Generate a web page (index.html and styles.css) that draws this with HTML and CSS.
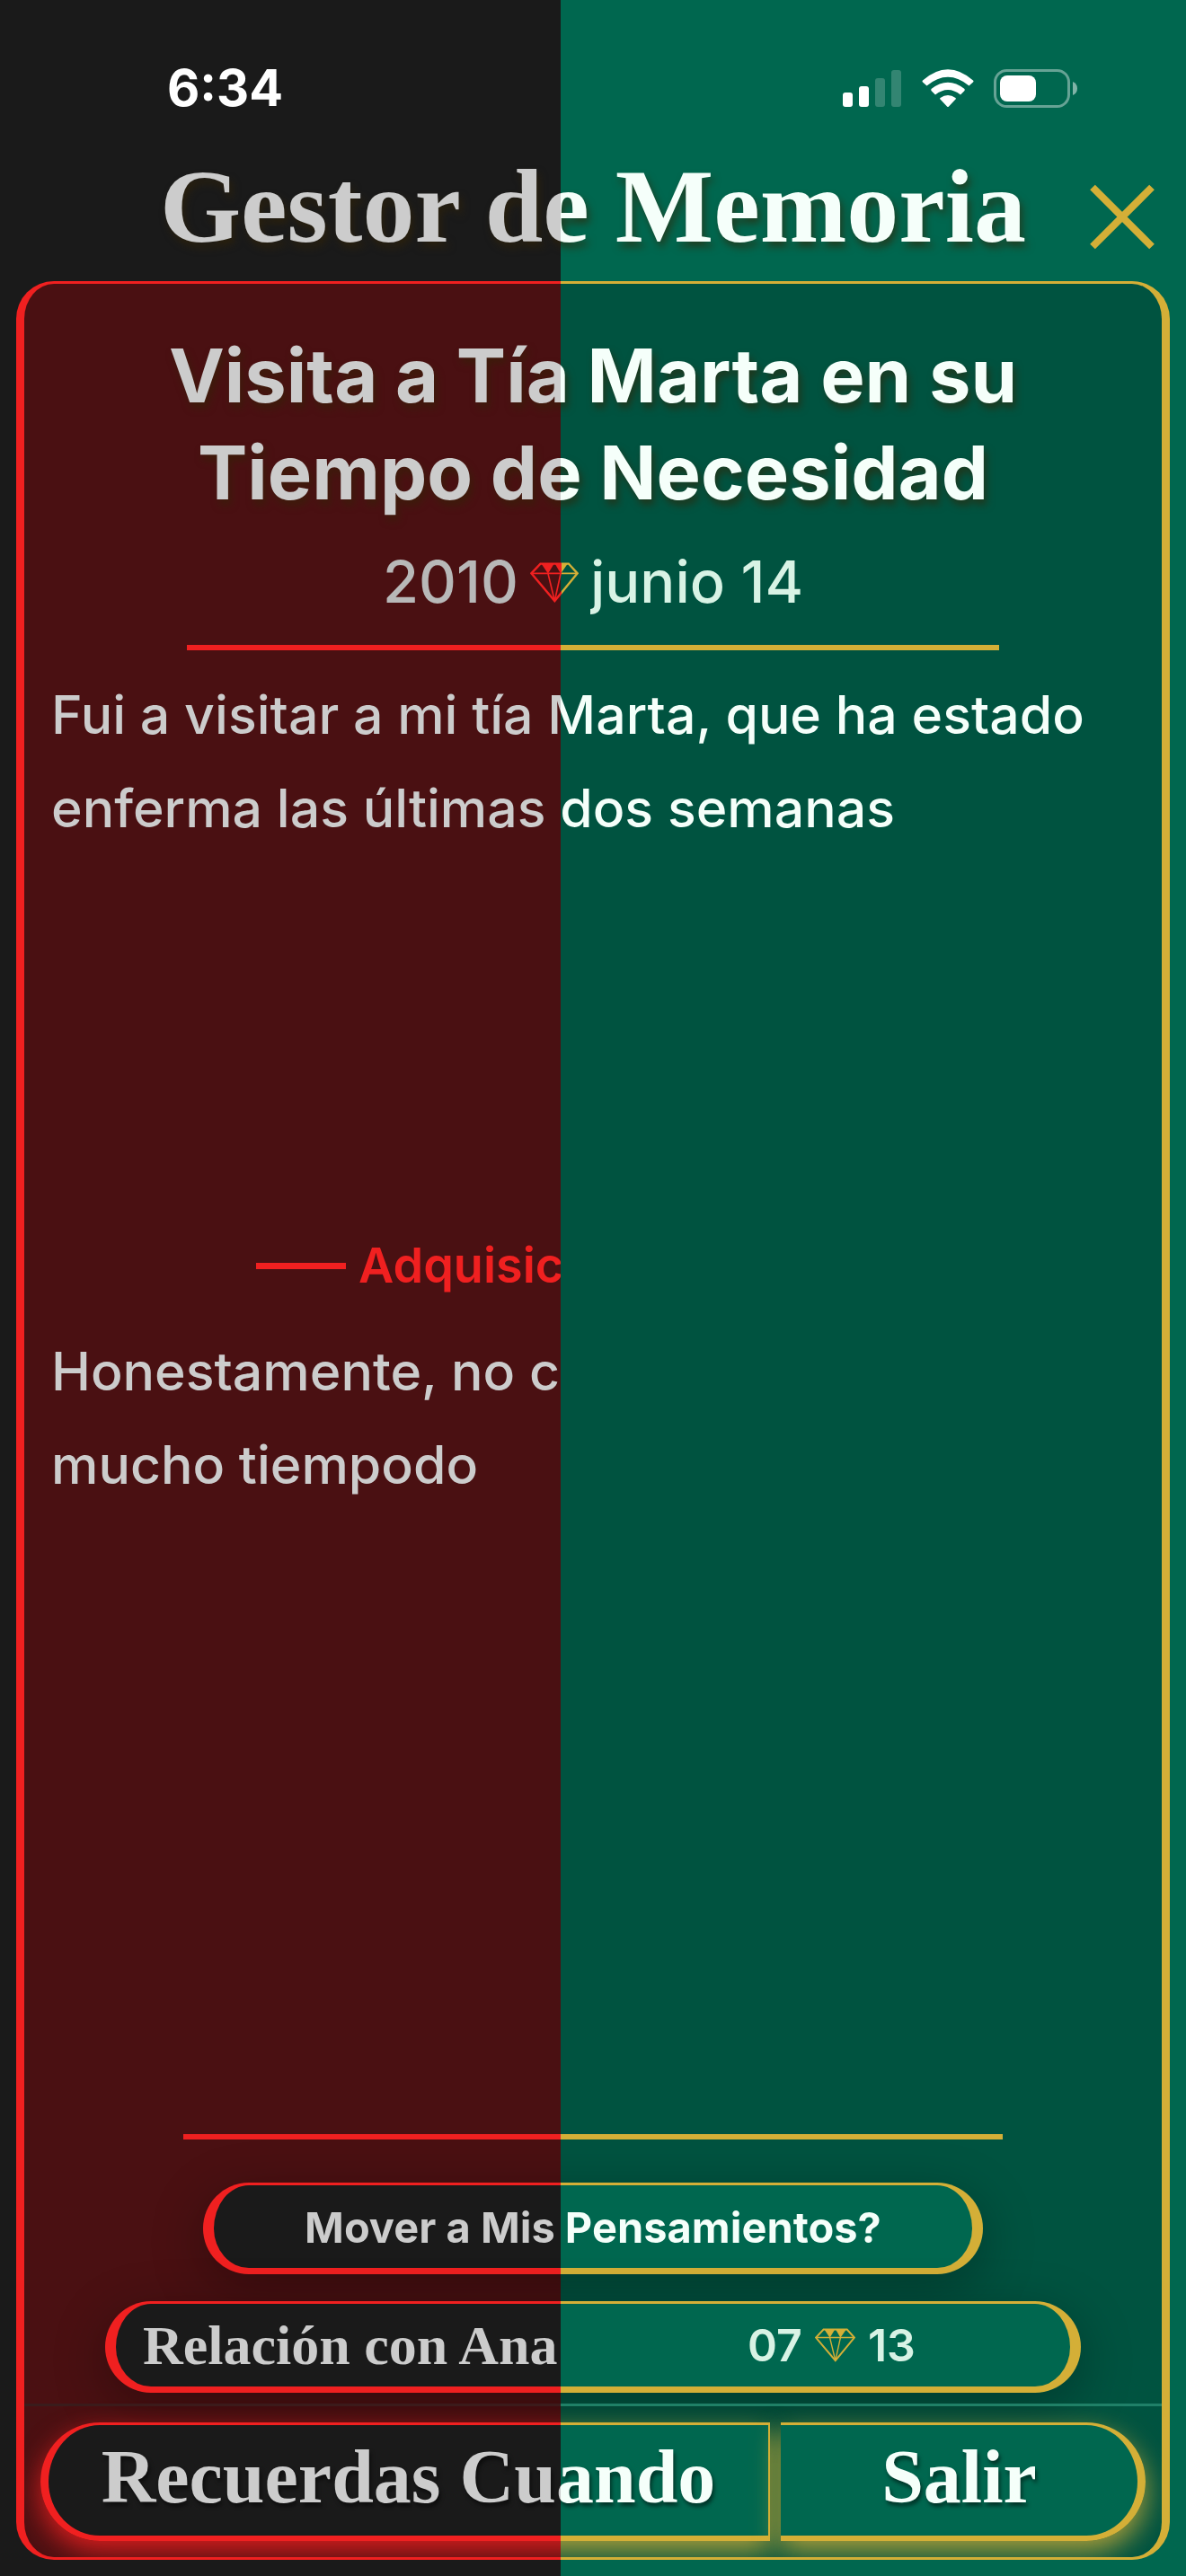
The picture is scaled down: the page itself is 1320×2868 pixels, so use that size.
FILE: index.html
```html
<!DOCTYPE html>
<html lang="es">
<head>
    <meta charset="UTF-8">
    <meta name="viewport" content="width=device-width, initial-scale=1.0">
    <title>Gestor de Memoria</title>
    <link rel="stylesheet" href="styles.css">
</head>
<body>
<div class="status-bar">
    <span class="time">6:34</span>
    <div class="status-icons">
        <svg width="66" height="43" viewBox="0 0 66 43" fill="#fff">
            <rect x="0" y="26" width="11" height="16" rx="3"/>
            <rect x="18" y="19" width="11" height="23" rx="3"/>
            <rect x="36" y="10" width="11" height="32" rx="3" opacity="0.2"/>
            <rect x="54" y="1" width="11" height="41" rx="3" opacity="0.2"/>
        </svg>
        <svg width="58" height="43" viewBox="0 0 58 43" fill="#fff">
            <path d="M1 12.500 Q0 13.500 1 14.500 L5.500 18.500 Q29 -1 52.500 18.500 L57 14.500 Q58 13.500 57 12.500 Q29 -12 1 12.500Z"/>
            <path d="M10.500 22 Q10 23 10.500 24 L15 28.500 Q29 17.500 43 28.500 L47.500 24 Q48 23 47.500 22 Q29 7.500 10.500 22Z"/>
            <path d="M20.500 32 Q29 26 37.500 32 L38 33 L30 41.500 Q29 42.500 28 41.500 L20 33Z"/>
        </svg>
        <svg width="94" height="43" viewBox="0 0 94 43">
            <rect x="1.500" y="1.500" width="82" height="40" rx="13" fill="none" stroke="#fff" stroke-width="3" opacity="0.4"/>
            <rect x="7" y="7" width="40" height="29" rx="8" fill="#fff"/>
            <path d="M88 14 Q93 16 93 21.500 Q93 27 88 29Z" fill="#fff" opacity="0.5"/>
        </svg>
    </div>
</div>

<header>
    <h1>Gestor de Memoria</h1>
    <button class="close" type="button" aria-label="Cerrar">
        <svg width="72" height="73" viewBox="0 0 72 73" stroke="#d4af37" stroke-width="8">
            <path d="M3 3.500 L69 69.500 M69 3.500 L3 69.500"/>
        </svg>
    </button>
</header>

<main class="card">
    <h2>Visita a Tía Marta en su Tiempo de Necesidad</h2>
    <div class="date">
        <span class="split-soft">2010</span>
        <svg class="gem" viewBox="0 0 160 132" stroke-width="7" fill="none" stroke="url(#gem-split)">
            <defs>
                <linearGradient id="gem-split" gradientUnits="userSpaceOnUse" x1="0" y1="0" x2="160" y2="0">
                    <stop offset="0.65" stop-color="#f02020"/>
                    <stop offset="0.65" stop-color="#d4af37"/>
                </linearGradient>
            </defs>
            <path d="M34 4 H127 L156 36 L81 127 L4 36 Z"/>
            <path d="M4 36.100 L156 36 M59 36 L81 127 L101 36" stroke-width="5"/>
            <path d="M36 2 H80 L59 37 Z M81 2 H125 L101 37 Z" fill="url(#gem-split)" stroke="none"/>
        </svg>
        <span class="split-soft">junio 14</span>
    </div>
    <div class="rule"></div>

    <section class="note">
        <p class="split-text">Fui a visitar a mi tía Marta, que ha estado enferma las últimas dos semanas</p>
    </section>

    <!-- only exists in the dark theme, stops at the split -->
    <section class="note dark-note">
        <h3><span class="dash"></span>Adquisic</h3>
        <p>Honestamente, no c<br>mucho tiempodo</p>
    </section>

    <div class="rule rule-wide"></div>
    <button class="pill pill-move" type="button"><span class="split-text">Mover a Mis Pensamientos?</span></button>
    <button class="pill pill-relation" type="button">
        <span class="relation split-text">Relación con Ana</span>
        <span class="count">
            07
            <svg class="gem gem-small" viewBox="0 0 160 132" stroke-width="7" fill="none" stroke="#d4af37">
                <path d="M34 4 H127 L156 36 L81 127 L4 36 Z"/>
                <path d="M4 36 L156 36 M59 36 L81 127 L101 36" stroke-width="5"/>
                <path d="M36 2 H80 L59 37 Z M81 2 H125 L101 37 Z" fill="#d4af37" stroke="none"/>
            </svg>
            13
        </span>
    </button>
    <div class="divider"></div>
    <div class="actions">
        <button class="action action-remember" type="button"><span>Recuerdas Cuando</span></button>
        <button class="action action-exit" type="button">Salir</button>
    </div>
</main>
</body>
</html>
```
FILE: styles.css
```css
/* Two themes side by side, everything changes colour at --split */
:root {
    --split: 47.27vw;
    --gold: #d4af37;
    --red: #f02020;
    --page: linear-gradient(90deg, #1a1a1a var(--split), #00674f var(--split));
    --panel: linear-gradient(90deg, #4a1012 var(--split), #005340 var(--split));
    --accent: linear-gradient(90deg, var(--red) var(--split), var(--gold) var(--split));
    --text: linear-gradient(90deg, #cccccc var(--split), #f5fffa var(--split));
    --soft: linear-gradient(90deg, #b8b8b8 var(--split), #d8f3e5 var(--split));
    --display: "Liberation Serif", "Times New Roman", serif;
}

* {
    box-sizing: border-box;
}

body {
    margin: 0;
    min-height: 100vh;
    padding-bottom: 18px;
    display: flex;
    flex-direction: column;
    font-family: Inter, "Liberation Sans", sans-serif;
    color: #f5fffa;
    background: var(--page) fixed;
}

h1, h2, h3, p {
    margin: 0;
}

button {
    font-family: inherit;
    color: inherit;
    cursor: pointer;
}

.split-text, .split-soft {
    background: var(--text) fixed;
    background-clip: text;
    -webkit-background-clip: text;
    -webkit-text-fill-color: transparent;
}

.split-soft {
    background-image: var(--soft);
}

/* Status bar */
.status-bar {
    display: flex;
    justify-content: space-between;
    align-items: center;
    padding: 68px 120px 0 186px;
    color: #fff;
}

.time {
    font-size: 56px;
    line-height: 60px;
    font-weight: 700;
}

.status-icons {
    display: flex;
    gap: 22px;
}

/* Title */
header {
    display: grid;
    grid-template-columns: 72px 1fr 72px;
    align-items: center;
    padding: 42px 35px 23px;
}

h1 {
    grid-column: 2;
    font-family: var(--display);
    font-size: 116px;
    line-height: 120px;
    text-align: center;
    white-space: nowrap;
    background: linear-gradient(90deg, #cccccc calc(var(--split) - 107px), #f5fffa calc(var(--split) - 107px));
    background-clip: text;
    -webkit-background-clip: text;
    -webkit-text-fill-color: transparent;
    filter: drop-shadow(3px 6px 4px rgba(50, 35, 5, 0.6));
}

.close {
    margin-top: 22px;
    padding: 0;
    border: none;
    background: none;
}

.close svg {
    display: block;
}

/* Card */
.card {
    flex: 1;
    display: flex;
    flex-direction: column;
    align-items: center;
    margin: 0 18px;
    padding: 48px 0 18px;
    overflow: hidden;
    border: solid transparent;
    border-width: 3px 9px;
    border-radius: 42px;
    background: var(--panel) fixed padding-box, var(--accent) fixed border-box;
}

h2 {
    align-self: stretch;
    padding: 0 150px;
    font-size: 83px;
    line-height: 108px;
    font-weight: 700;
    text-align: center;
    background: linear-gradient(90deg, #cccccc calc(var(--split) - 27px), #f5fffa calc(var(--split) - 27px));
    background-clip: text;
    -webkit-background-clip: text;
    -webkit-text-fill-color: transparent;
    filter: drop-shadow(3px 6px 4px rgba(50, 35, 5, 0.6));
}

.date {
    display: flex;
    align-items: center;
    gap: 13px;
    margin-top: 28px;
    font-size: 65px;
    line-height: 80px;
    font-weight: 500;
}

.gem {
    width: 54px;
    height: 45px;
}

.rule {
    flex: none;
    width: 904px;
    max-width: 72%;
    height: 6px;
    margin-top: 30px;
    background: var(--accent) fixed;
}

.rule-wide {
    width: 912px;
    max-width: 73%;
    margin: 0 0 48px;
}

.note {
    align-self: stretch;
    min-height: 645px;
    padding: 20px 30px 0;
    font-size: 59px;
    line-height: 104px;
    font-weight: 500;
}

.dark-note {
    flex: 1;
    align-self: flex-start;
    width: calc(var(--split) - 27px);
    padding-top: 0;
    padding-right: 0;
    overflow: hidden;
    white-space: nowrap;
    color: #cccccc;
}

h3 {
    display: flex;
    align-items: center;
    gap: 14px;
    margin: 0 0 26px 228px;
    font-size: 54px;
    line-height: 80px;
    font-weight: 600;
    color: var(--red);
}

.dash {
    flex: none;
    width: 100px;
    height: 7px;
    background: var(--red);
}

/* Pills */
.pill {
    flex: none;
    height: 102px;
    padding: 0;
    border: solid transparent;
    border-width: 3px 12px 7px;
    border-radius: 51px;
    background: var(--page) fixed padding-box, var(--accent) fixed border-box;
    box-shadow: 0 15px 60px rgba(0, 0, 0, 0.3);
    font-size: 47px;
    font-weight: 700;
}

.pill-move {
    width: 868px;
    max-width: 90%;
    margin-bottom: 30px;
}

.pill-relation {
    display: grid;
    grid-template-columns: 1fr 1fr;
    align-items: center;
    width: 1086px;
    max-width: 94%;
    margin-bottom: 12px;
}

.relation {
    padding-left: 30px;
    font-family: var(--display);
    font-size: 62px;
    line-height: 72px;
    text-align: left;
    white-space: nowrap;
}

.count {
    display: flex;
    justify-content: center;
    align-items: center;
    gap: 14px;
    font-size: 50px;
    font-weight: 600;
    color: #d8f3e5;
}

.gem-small {
    width: 45px;
    height: 38px;
}

.divider {
    align-self: stretch;
    height: 3px;
    background: linear-gradient(90deg, #3a1c1c var(--split), #1f8068 var(--split)) fixed;
}

/* Bottom buttons */
.actions {
    align-self: stretch;
    display: grid;
    grid-template-columns: 2fr 1fr;
    gap: 12px;
    padding: 18px 18px 0;
}

.action {
    position: relative;
    height: 132px;
    padding: 0 0 8px;
    border: solid transparent;
    background: var(--page) fixed padding-box, var(--accent) fixed border-box;
    font-family: var(--display);
    font-size: 84px;
    font-weight: 700;
}

.action-remember {
    border-width: 3px 2px 6px 9px;
    border-radius: 66px 0 0 66px;
}

.action-remember span {
    display: block;
    background: linear-gradient(90deg, #cccccc calc(var(--split) - 54px), #f5fffa calc(var(--split) - 54px));
    background-clip: text;
    -webkit-background-clip: text;
    -webkit-text-fill-color: transparent;
    filter: drop-shadow(2px 4px 2px rgba(0, 0, 0, 0.5));
}

/* glow, red up to the split and gold after it */
.action-remember::before, .action-remember::after {
    content: "";
    position: absolute;
    inset: -3px -2px -6px -9px;
    border-radius: 66px 0 0 66px;
    box-shadow: 0 12px 30px rgba(240, 32, 32, 0.85);
    clip-path: inset(-60px calc(100% - var(--split) + 45px) -60px -60px);
}

.action-remember::after {
    box-shadow: 0 12px 30px rgba(212, 175, 55, 0.8);
    clip-path: inset(-60px -60px -60px calc(var(--split) - 45px));
}

.action-exit {
    border-width: 3px 9px 6px 0;
    border-radius: 0 66px 66px 0;
    box-shadow: 0 12px 30px rgba(212, 175, 55, 0.8);
    text-shadow: 2px 4px 4px rgba(0, 0, 0, 0.5);
}
```
